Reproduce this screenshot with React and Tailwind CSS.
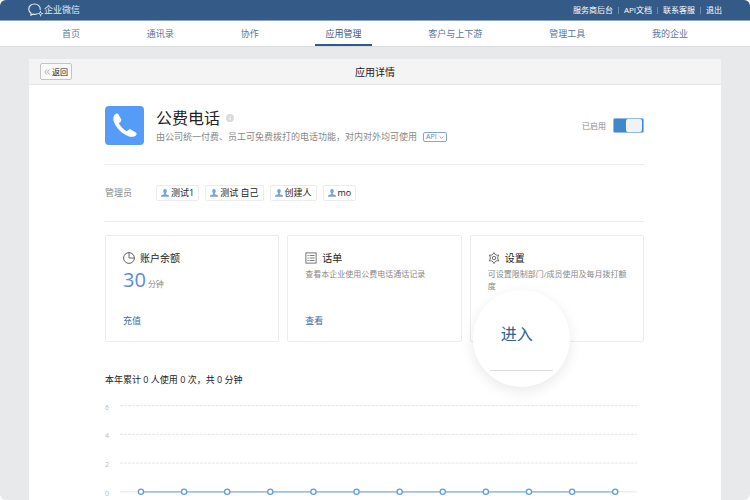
import { Fragment } from "react";

const TOP_LINKS = ["服务商后台", "API文档", "联系客服", "退出"];
const NAV_ITEMS = ["首页", "通讯录", "协作", "应用管理", "客户与上下游", "管理工具", "我的企业"];
const ACTIVE_NAV = "应用管理";
const ADMINS = ["测试1", "测试 自己", "创建人", "mo"];
const USAGE = [0, 0, 0, 0, 0, 0, 0, 0, 0, 0, 0, 0];

function Logo() {
  return (
    <svg viewBox="0 0 32 28" className="w-4 h-3.5" fill="none" stroke="#dbe6f3" strokeWidth="2.4" strokeLinecap="round" strokeLinejoin="round">
      <path d="M24.500 13C25 7 20 2 13 2C6 2 1.500 6.500 1.500 12C1.500 15.500 3.300 18.600 6.200 20.400L5.500 24.500L10.200 22.200C13 22.900 16 22.600 18.500 21.500" />
      <g strokeWidth="1.800">
        <path d="M25 16.500V19M29.500 21H27.500M25 26V23.500M21 21H22.800" />
        <path d="M25 18L28.500 21.200L25 24.800L21.800 21.200Z" strokeWidth="1.200" />
      </g>
    </svg>
  );
}

function PhoneIcon() {
  return (
    <svg viewBox="0 0 39 39" className="size-[39px] shrink-0 rounded-sm bg-[#549cf8]">
      <path d="M10.500 8C11.700 7.200 12.900 7.400 13.600 8.600L16 13C16.600 14.200 16.400 15.200 15.400 16L13.900 17.200C15.300 20.400 18.300 23.400 21.800 25.200L23.300 23.900C24.200 23.200 25.200 23.100 26.200 23.700L30.600 26.300C31.800 27.100 31.900 28.200 31 29.200C29.200 31.100 26.400 31.300 23.400 30.200C16.300 27.500 10.800 21.600 8.700 15.300C7.800 12.300 8.400 9.500 10.500 8Z" fill="#fff" />
    </svg>
  );
}

function UserIcon() {
  return (
    <svg viewBox="0 0 16 16" className="size-2" fill="#78a3d7">
      <path d="M8 0C5.500 0 4.300 2 4.500 4.300C4.600 6.300 5.500 7.500 6.300 8.500V10.300L1.500 12C.5 12.400 0 13 0 14V15.500H16V14C16 13 15.500 12.400 14.500 12L9.700 10.300V8.500C10.500 7.500 11.400 6.300 11.500 4.300C11.700 2 10.500 0 8 0Z" />
    </svg>
  );
}

function PieIcon() {
  return (
    <svg viewBox="0 0 12 12" className="size-3" fill="none" stroke="#555" strokeWidth="0.9">
      <circle cx="6" cy="6" r="5.400" />
      <path d="M6 .6V6H11.400" />
    </svg>
  );
}

function ListIcon() {
  return (
    <svg viewBox="0 0 12 12" className="size-3" fill="none" stroke="#555" strokeWidth="0.8">
      <rect x="0.900" y="0.900" width="10.200" height="10.200" />
      <path d="M2.500 3.500H3.700M4.700 3.500H9.500M2.500 6H3.700M4.700 6H9.500M2.500 8.500H3.700M4.700 8.500H9.500" />
    </svg>
  );
}

function GearIcon() {
  return (
    <svg viewBox="0 0 24 24" className="size-3" fill="none" stroke="#555" strokeWidth="1.7" strokeLinejoin="round">
      <path d="M10 4.500L12 1L14 4.500L17 6.200L21.500 6.500L19.500 10V14L21.500 17.500L17 17.800L14 19.500L12 23L10 19.500L7 17.800L2.500 17.500L4.500 14V10L2.500 6.500L7 6.200Z" />
      <circle cx="12" cy="12" r="3.500" />
    </svg>
  );
}

function Card({ icon, title, children }) {
  return (
    <section className="relative flex flex-col min-h-[107px] pl-[17px] pr-3 pt-4 pb-[14px] border border-[#ececec] rounded-xs">
      <h2 className="flex items-center gap-[5px] text-[10px] leading-3 text-[#222]">
        {icon}
        {title}
      </h2>
      {children}
    </section>
  );
}

function UsageChart() {
  const pointX = i => 36 + i * 43.2;
  const pointY = value => 91 - value * 14.4;
  return (
    <svg viewBox="0 0 540 110" className="block w-full mt-[15px]">
      {[6, 4, 2, 0].map(tick => (
        <g key={tick}>
          <line x1="15" x2="533" y1={pointY(tick)} y2={pointY(tick)} stroke="#e6e6e6" strokeDasharray={tick ? "3 1" : undefined} />
          <text x="0" y={pointY(tick) + 4} fontSize="7" fill="#b5bac1">{tick}</text>
        </g>
      ))}
      <polyline points={USAGE.map((v, i) => pointX(i) + "," + pointY(v)).join(" ")} fill="none" stroke="#9cc3ec" strokeWidth="1.800" />
      {USAGE.map((v, i) => (
        <circle key={i} cx={pointX(i)} cy={pointY(v)} r="2.600" fill="#fff" stroke="#5b9fe3" strokeWidth="1.300" />
      ))}
    </svg>
  );
}

export default function App() {
  return (
    <div className="h-screen overflow-hidden rounded-md bg-[#e7e9eb] text-[9px] leading-3 text-[#222] font-['Open_Sans','Noto_Sans_CJK_SC',sans-serif]">
      <header className="flex items-center justify-between h-[21px] px-7 bg-[#345a87] border-b border-[#8da5c0]">
        <a href="#" className="flex items-center text-[#e3ebf5]">
          <Logo />
          企业微信
        </a>
        <div className="flex items-center text-[8px] text-white">
          {TOP_LINKS.map((label, i) => (
            <Fragment key={label}>
              {i > 0 && <span className="w-px h-[7px] mx-[5px] bg-[#6f8cae]" />}
              <a href="#">{label}</a>
            </Fragment>
          ))}
        </div>
      </header>

      <nav className="flex justify-between h-[26px] px-[52px] bg-white border-b border-[#d9dbdd] text-[#56779f]">
        {NAV_ITEMS.map(label => (
          <a key={label} href="#" className={"px-[10px] pt-[7px] border-b-2 " + (label === ACTIVE_NAV ? "border-[#345a87] text-[#345a87]" : "border-transparent")}>
            {label}
          </a>
        ))}
      </nav>

      <main className="mx-[29px] mt-3 bg-white">
        <div className="grid grid-cols-3 items-center h-[26px] px-[11px] bg-[#f4f4f4] border-b border-[#e6e6e6]">
          <button className="flex items-center justify-self-start gap-[2px] h-[17px] px-[3px] bg-[#fafafa] border border-[#c4c4c4] rounded-xs text-[8px]">
            <svg viewBox="0 0 6 6" className="size-1.5" fill="none" stroke="#888" strokeWidth="0.7">
              <path d="M3 .5L.8 3L3 5.500M5.600 .5L3.400 3L5.600 5.500" />
            </svg>
            返回
          </button>
          <h1 className="text-center text-[10px]">应用详情</h1>
        </div>

        <div className="pl-[76px] pr-[77px] pt-[21px]">
          <div className="flex items-center pb-[19px] border-b border-[#ececec]">
            <PhoneIcon />
            <div className="ml-3">
              <div className="flex items-center gap-1.5">
                <h2 className="text-[16px] leading-5">公费电话</h2>
                <svg viewBox="0 0 8 8" className="size-2">
                  <circle cx="4" cy="4" r="4" fill="#d9d9d9" />
                  <path d="M4 1.600V2.500M4 3.300V6.300" stroke="#fff" strokeWidth="1" />
                </svg>
              </div>
              <div className="flex items-center gap-1.5 mt-[3px] text-[#888]">
                <p>由公司统一付费、员工可免费拨打的电话功能，对内对外均可使用</p>
                <button className="flex items-center gap-[2px] h-[10px] px-[2px] border border-[#86a5cc] rounded-xs text-[7px] leading-2 text-[#5f86b8]">
                  API
                  <svg viewBox="0 0 5 5" className="size-[5px]" fill="none" stroke="#5f86b8" strokeWidth="0.8">
                    <path d="M.7 1.500L2.500 3.300L4.300 1.500" />
                  </svg>
                </button>
              </div>
            </div>
            <label className="flex items-center gap-[7px] ml-auto text-[8px] text-[#888]">
              已启用
              <input
                type="checkbox"
                role="switch"
                defaultChecked
                className="appearance-none flex w-[31px] h-[15px] rounded-xs border border-[#8fbbe6] bg-[#3f89ca] pr-px before:h-full before:w-4 before:rounded-xs before:bg-[#f0f2f6] checked:before:ml-auto"
              />
            </label>
          </div>

          <div className="flex items-center py-5 border-b border-[#ececec]">
            <span className="w-[51px] text-[#888]">管理员</span>
            <ul className="flex gap-1.5">
              {ADMINS.map(name => (
                <li key={name} className="flex items-center gap-[2px] h-4 px-1 border border-[#ececec] rounded-xs">
                  <UserIcon />
                  {name}
                </li>
              ))}
            </ul>
          </div>

          <div className="grid grid-cols-3 gap-2 mt-[13px]">
            <Card icon={<PieIcon />} title="账户余额">
              <p className="text-[8px] text-[#888]">
                <span className="mr-[2px] text-[20px] leading-8 text-[#5b8bdb]">30</span>
                分钟
              </p>
              <a href="#" className="mt-auto text-[#3b6a9b]">充值</a>
            </Card>
            <Card icon={<ListIcon />} title="话单">
              <p className="mt-1 text-[8px] text-[#888]">查看本企业使用公费电话通话记录</p>
              <a href="#" className="mt-auto text-[#3b6a9b]">查看</a>
            </Card>
            <Card icon={<GearIcon />} title="设置">
              <p className="mt-1 text-[8px] text-[#888]">可设置限制部门/成员使用及每月拨打额度</p>
              <div className="absolute left-[2px] top-[54px] flex flex-col items-center size-[97px] px-[17px] pt-8 rounded-full bg-white shadow-[0_4px_14px_rgba(0,0,0,0.09)]">
                <a href="#" className="w-full pb-6 pl-[11px] border-b border-[#dcdcdc] text-[16px] leading-6 text-[#2b6299]">进入</a>
              </div>
            </Card>
          </div>

          <p className="mt-8">本年累计 0 人使用 0 次，共 0 分钟</p>
          <UsageChart />
        </div>
      </main>
    </div>
  );
}
